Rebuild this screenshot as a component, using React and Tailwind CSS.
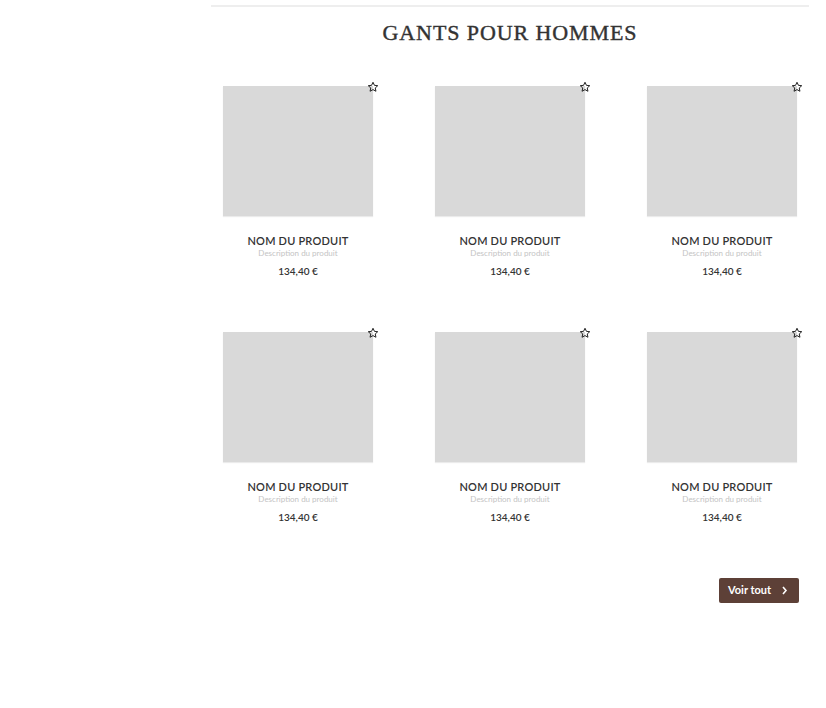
import React from "react";

const Star = () => (
  <svg width="12" height="12" viewBox="0 0 24 24" fill="none" stroke="#222" strokeWidth="2" strokeLinejoin="round">
    <path d="M12 2.5l2.9 6.2 6.6.7-5 4.5 1.4 6.6L12 17.2l-5.9 3.3 1.4-6.6-5-4.5 6.6-.7z" />
  </svg>
);

const Card = () => (
  <div className="flex flex-col items-center">
    <div className="relative w-[150px] h-[130px] bg-[#d9d9d9] shadow-[0_1px_1px_rgba(0,0,0,0.08)]">
      <div className="absolute -right-[6px] -top-[5px]">
        <Star />
      </div>
    </div>
    <div className="mt-[18px] text-[11px] leading-[14px] font-semibold text-[#333] tracking-[0.2px] font-['Lato',sans-serif]">NOM DU PRODUIT</div>
    <div className="text-[8px] leading-[10px] text-[#c4c4c4] font-['Lato',sans-serif]">Description du produit</div>
    <div className="mt-[6px] text-[10px] leading-[14px] font-semibold text-[#333] font-['Lato',sans-serif]">134,40 €</div>
  </div>
);

export default function App() {
  return (
    <div className="w-[826px] h-[708px] bg-white">
      <div className="ml-[211px] w-[598px] pt-[5px]">
        <div className="border-t-2 border-[#eeeeee]" />
        <h1 className="mt-[13px] text-center text-[22px] leading-[26px] tracking-[0.9px] text-[#333] [-webkit-text-stroke:0.4px_#333] font-['Liberation_Serif',serif]">GANTS POUR HOMMES</h1>
        <div className="mt-[40px] grid grid-cols-3 gap-x-[38px] gap-y-[54px]">
          {Array.from({ length: 6 }).map((_, i) => (
            <Card key={i} />
          ))}
        </div>
        <div className="mt-[54px] flex justify-end pr-[10px]">
          <button className="w-[80px] h-[25px] bg-[#5d4037] rounded-[2px] flex items-center justify-between pl-[9px] pr-[11px] text-white text-[11px] font-bold font-['Lato',sans-serif]">
            <span>Voir tout</span>
            <svg width="7" height="9" viewBox="0 0 7 9" fill="none" stroke="white" strokeWidth="1.6">
              <path d="M2 1l3 3.5L2 8" />
            </svg>
          </button>
        </div>
      </div>
    </div>
  );
}
